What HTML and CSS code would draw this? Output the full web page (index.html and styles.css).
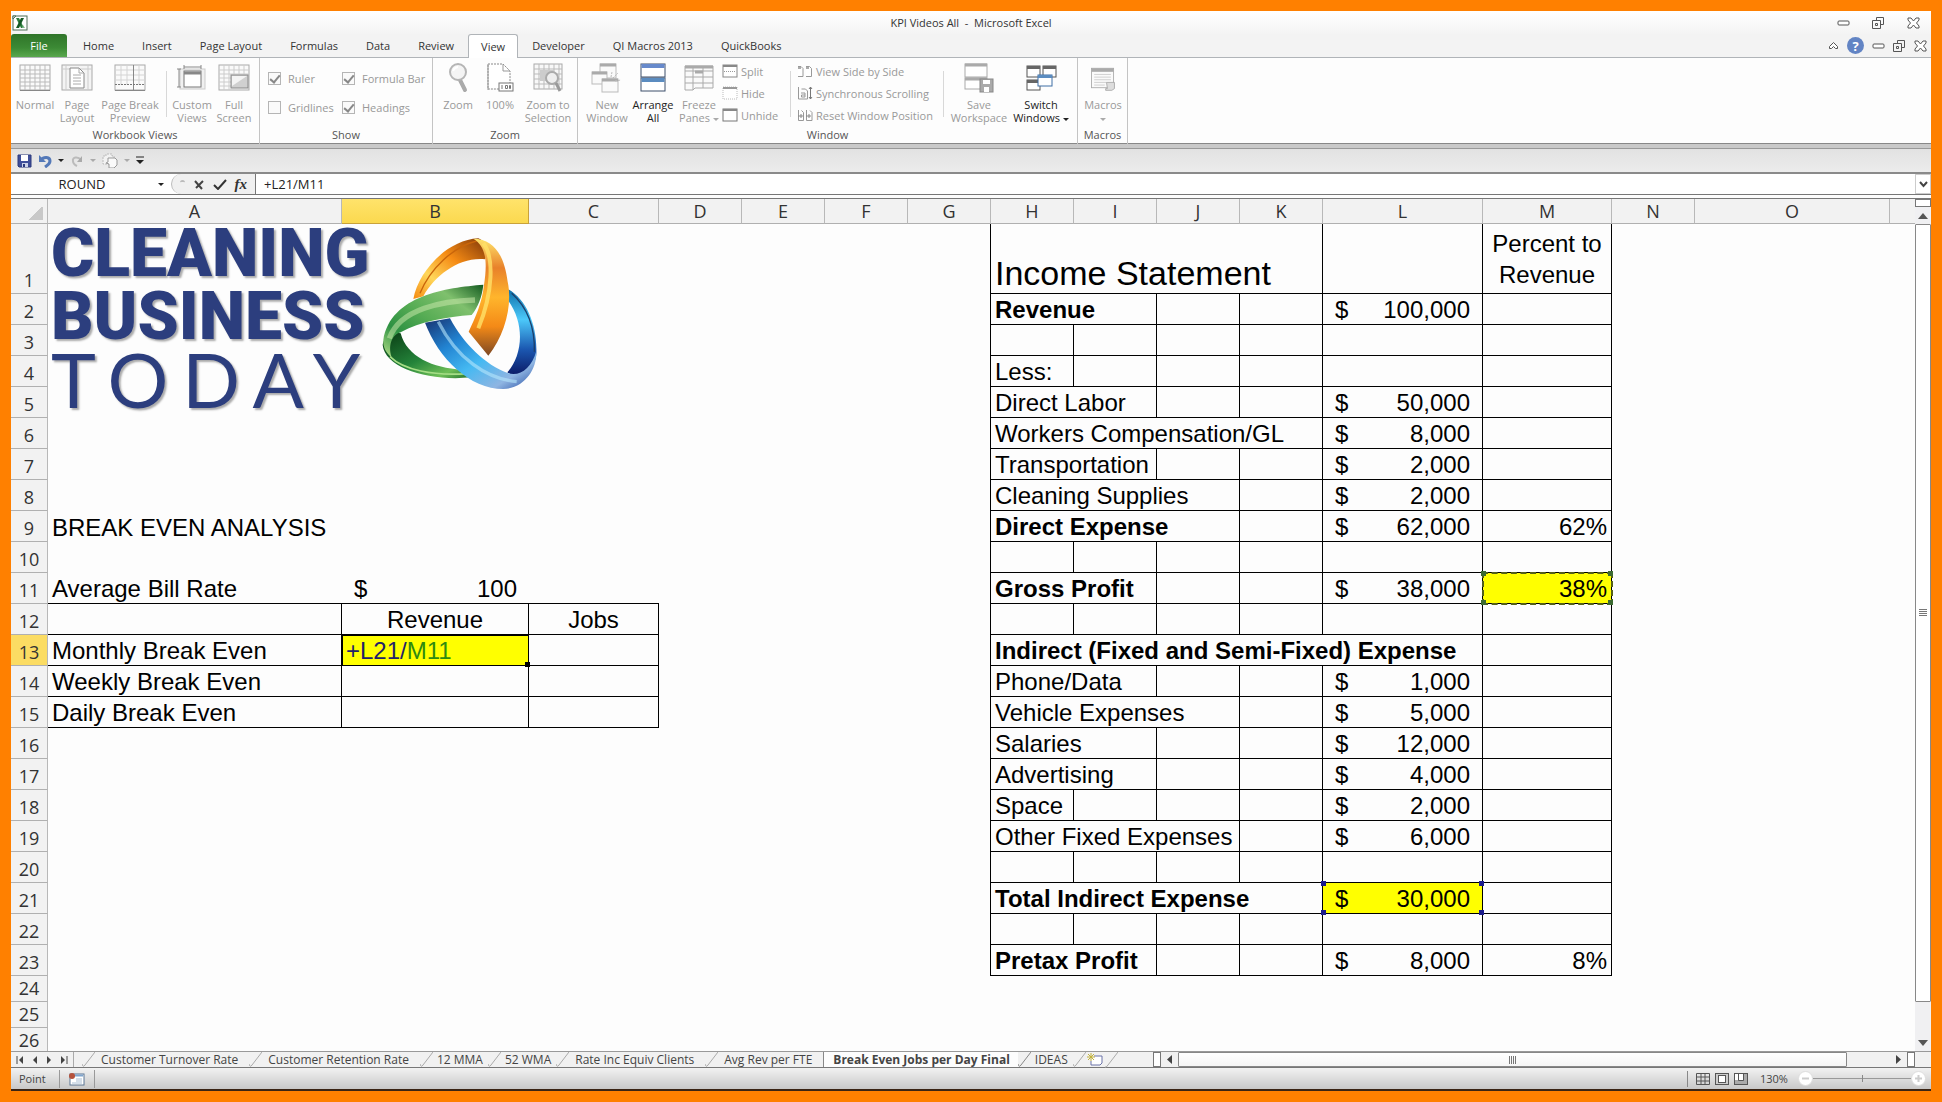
FILE: index.html
```html
<!DOCTYPE html>
<html lang="en">
<head>
  <meta charset="UTF-8" />
  <title>KPI Videos All - Microsoft Excel</title>
  <meta name="viewport" content="width=device-width, initial-scale=1.0"/>
  <link rel="stylesheet" href="styles.css">
</head>

<body>
  <div class="window">
    <!-- Title bar -->
    <header class="titlebar">
      <svg class="app-icon" width="16" height="16" viewBox="0 0 16 16">
        <rect x="1" y="1" width="14" height="14" fill="#fff" stroke="#4f6f57" />
        <path d="M1 4V1h3z" fill="#fff" stroke="#4f6f57" />
        <path d="M4 3h3l5 10H9z" fill="#2d7d3c" />
        <path d="M9 3h3L7 13H4z" fill="#155a25" />
        <path d="M11 10l2 3h-3z" fill="#7fb98a" />
      </svg>
      <h1>KPI Videos All&nbsp; -&nbsp; Microsoft Excel</h1>
      <div class="win-buttons">
        <button type="button" aria-label="Minimize"><svg width="13" height="12" viewBox="0 0 13 12"><rect x="1" y="4" width="11" height="4" rx="1" fill="#fff" stroke="#555" /></svg></button>
        <button type="button" aria-label="Restore"><svg width="13" height="12" viewBox="0 0 13 12"><path d="M4.500 3.500v-3h7v7h-3M.5 3.500h8v8h-8zM3.500 6.500h2v2h-2z" fill="none" stroke="#555" /></svg></button>
        <button type="button" aria-label="Close"><svg width="13" height="12" viewBox="0 0 13 12"><path d="M1 1h3l2.500 3L9 1h3v2L9.500 6 12 9v2H9L6.500 8 4 11H1V9l2.500-3L1 3z" fill="#fff" stroke="#555" /></svg></button>
      </div>
    </header>

    <!-- Ribbon tabs -->
    <nav class="tabs">
      <a class="file" href="#file">File</a>
      <a href="#home">Home</a>
      <a href="#insert">Insert</a>
      <a href="#page-layout">Page Layout</a>
      <a href="#formulas">Formulas</a>
      <a href="#data">Data</a>
      <a href="#review">Review</a>
      <a class="active" href="#view">View</a>
      <a href="#developer">Developer</a>
      <a href="#qi-macros">QI Macros 2013</a>
      <a href="#quickbooks">QuickBooks</a>
      <div class="doc-buttons">
        <button type="button" aria-label="Minimize ribbon"><svg width="11" height="12" viewBox="0 0 11 12"><path d="M1.500 6.500l4-4 4 4v2h-2l-2-2-2 2h-2z" fill="#fff" stroke="#555" /></svg></button>
        <button type="button" class="help" aria-label="Help">?</button>
        <button type="button" aria-label="Minimize workbook"><svg width="13" height="12" viewBox="0 0 13 12"><rect x="1" y="4" width="11" height="4" rx="1" fill="#fff" stroke="#555" /></svg></button>
        <button type="button" aria-label="Restore workbook"><svg width="13" height="12" viewBox="0 0 13 12"><path d="M4.500 3.500v-3h7v7h-3M.5 3.500h8v8h-8zM3.500 6.500h2v2h-2z" fill="none" stroke="#555" /></svg></button>
        <button type="button" aria-label="Close workbook"><svg width="13" height="12" viewBox="0 0 13 12"><path d="M1 1h3l2.500 3L9 1h3v2L9.500 6 12 9v2H9L6.500 8 4 11H1V9l2.500-3L1 3z" fill="#fff" stroke="#555" /></svg></button>
      </div>
    </nav>

    <!-- Ribbon -->
    <section class="ribbon">
      <div class="group views">
        <div class="tools">
          <button type="button" class="tool">
            <svg width="32" height="28" viewBox="0 0 32 28"><rect x="1" y="1" width="30" height="25" fill="#fafafa" stroke="#aaa" /><path d="M1 6h30M1 10h30M1 14h30M1 18h30M1 22h30M6 1v25M11 1v25M16 1v25M21 1v25M26 1v25" stroke="#bbb" /><path d="M1 26.500h30" stroke="#888" /></svg>
            <span>Normal</span>
          </button>
          <button type="button" class="tool">
            <svg width="32" height="28" viewBox="0 0 32 28"><rect x="1" y="1" width="30" height="25" fill="#f4f4f4" stroke="#aaa" /><path d="M1 5h30M5 1v25M27 1v25" stroke="#ccc" /><path d="M9 4h9l5 5v15H9z" fill="#fff" stroke="#888" /><path d="M18 4v5h5M12 11h8M12 14h8M12 17h8M12 20h8" fill="none" stroke="#aaa" /></svg>
            <span>Page<br>Layout</span>
          </button>
          <button type="button" class="tool wide">
            <svg width="32" height="28" viewBox="0 0 32 28"><rect x="1" y="1" width="30" height="25" fill="#fafafa" stroke="#aaa" /><path d="M1 6h30M1 11h30M1 16h30M7 1v20M13 1v20M25 1v20" stroke="#d4d4d4" /><path d="M19.500 1v25" stroke="#888" /><path d="M1 20.500h30" stroke="#777" stroke-dasharray="2 1" /><path d="M1 26.500h30" stroke="#888" /></svg>
            <span>Page Break<br>Preview</span>
          </button>
          <span class="divider"></span>
          <button type="button" class="tool">
            <svg width="32" height="28" viewBox="0 0 32 28"><rect x="4" y="5" width="25" height="20" fill="#f0f0f0" stroke="#ccc" /><rect x="8" y="7" width="17" height="16" fill="#fff" stroke="#777" /><path d="M8 9h17" stroke="#888" stroke-width="3" /><path d="M8 3h17M8 1v4M25 1v4M3 5v18M1 5h4M1 23h4" stroke="#888" /></svg>
            <span>Custom<br>Views</span>
          </button>
          <button type="button" class="tool">
            <svg width="32" height="28" viewBox="0 0 32 28"><rect x="1" y="1" width="30" height="25" fill="#fafafa" stroke="#aaa" /><path d="M1 6h30M1 10h30M1 14h12M1 18h12M1 22h12M6 1v25M11 1v25M16 1v9M21 1v9M26 1v9" stroke="#ccc" /><rect x="13" y="11" width="17" height="13" fill="#d0d0d0" stroke="#888" /><path d="M14 12h15L14 22z" fill="#f4f4f4" /></svg>
            <span>Full<br>Screen</span>
          </button>
        </div>
        <h2>Workbook Views</h2>
      </div>

      <div class="group show">
        <div class="checks">
          <label><input type="checkbox" checked> Ruler</label>
          <label><input type="checkbox" checked> Formula Bar</label>
          <label><input type="checkbox"> Gridlines</label>
          <label><input type="checkbox" checked> Headings</label>
        </div>
        <h2>Show</h2>
      </div>

      <div class="group zoom">
        <div class="tools">
          <button type="button" class="tool">
            <svg width="32" height="30" viewBox="0 0 32 30"><path d="M18 17l5 10" stroke="#aaa" stroke-width="4" stroke-linecap="round" /><circle cx="16" cy="9" r="8" fill="#f4f4f4" stroke="#b5b5b5" stroke-width="2" /><path d="M11 8a6 6 0 0 1 5-4" fill="none" stroke="#fff" stroke-width="2" /></svg>
            <span>Zoom</span>
          </button>
          <button type="button" class="tool">
            <svg width="32" height="30" viewBox="0 0 32 30"><path d="M4 1h15l7 7v18H4z" fill="#fff" stroke="#888" stroke-dasharray="2 1" /><path d="M4 1v26M19 1v7h7" fill="none" stroke="#999" /><rect x="15" y="20" width="14" height="8" fill="#fff" stroke="#777" /><path d="M18 22v4M21.500 22.500h2v3h-2zM25.500 22.500h1v3h-1z" fill="none" stroke="#777" /></svg>
            <span>100%</span>
          </button>
          <button type="button" class="tool wide">
            <svg width="32" height="30" viewBox="0 0 32 30"><rect x="2" y="1" width="28" height="25" fill="#f8f8f8" stroke="#aaa" /><path d="M2 6h28M2 11h28M2 16h28M2 21h28M7 1v25M12 1v25M17 1v25M22 1v25M27 1v25" stroke="#bbb" /><rect x="8" y="7" width="14" height="11" fill="#ccc" /><circle cx="20" cy="15" r="6" fill="#eee" stroke="#aaa" stroke-width="2" /><path d="M24 20l4 8" stroke="#999" stroke-width="3" /></svg>
            <span>Zoom to<br>Selection</span>
          </button>
        </div>
        <h2>Zoom</h2>
      </div>

      <div class="group windows">
        <div class="tools">
          <button type="button" class="tool">
            <svg width="32" height="30" viewBox="0 0 32 30"><g fill="#fafafa" stroke="#bbb"><rect x="9" y="1" width="16" height="14" /><rect x="1" y="9" width="15" height="12" /><rect x="11" y="16" width="16" height="13" /></g><path d="M9 2h16M1 10h15M11 17h16" stroke="#aaa" stroke-width="3" /><path d="M22 15l5-5M24 18l6-1M20 14l1-5" stroke="#bbb" stroke-dasharray="2 1" /></svg>
            <span>New<br>Window</span>
          </button>
          <button type="button" class="tool enabled">
            <svg width="26" height="30" viewBox="0 0 26 30"><rect x="1" y="1" width="24" height="13" fill="#fff" stroke="#3d4f6b" /><rect x="1" y="15" width="24" height="13" fill="#fff" stroke="#3d4f6b" /><path d="M1.500 3h23" stroke="#6689cb" stroke-width="4" /><path d="M1.500 17h23" stroke="#5b8cc0" stroke-width="4" /></svg>
            <span>Arrange<br>All</span>
          </button>
          <button type="button" class="tool">
            <svg width="32" height="30" viewBox="0 0 32 30"><path d="M2 3h28v22H12l-2 2H2z" fill="#fafafa" stroke="#aaa" /><path d="M2 8h28M2 14h28M2 20h28M20 3v22M10 3v24" stroke="#aaa" /><path d="M12 9h8M2 4h28" stroke="#aaa" stroke-width="3" /></svg>
            <span>Freeze<br>Panes <i class="caret"></i></span>
          </button>
          <div class="stack">
            <button type="button"><svg width="16" height="14" viewBox="0 0 16 14"><rect x="1" y="1" width="14" height="12" fill="#fff" stroke="#888" /><path d="M1 2h14" stroke="#888" stroke-width="2" /><path d="M2 7.500h12" stroke="#999" stroke-dasharray="1 1" /></svg>Split</button>
            <button type="button"><svg width="16" height="14" viewBox="0 0 16 14"><rect x="1" y="1" width="14" height="12" fill="#fff" stroke="#bbb" stroke-dasharray="1 1" /><path d="M1 2h14" stroke="#999" stroke-width="2" /></svg>Hide</button>
            <button type="button"><svg width="16" height="14" viewBox="0 0 16 14"><rect x="1" y="1" width="14" height="12" fill="#fff" stroke="#777" /><path d="M1 2h14" stroke="#888" stroke-width="2" /></svg>Unhide</button>
          </div>
          <span class="divider"></span>
          <div class="stack side">
            <button type="button"><svg width="16" height="14" viewBox="0 0 16 14"><path d="M1 12.500h5v-8l-2-2H1M9 12.500h5.500v-8l-2-2H9" fill="#fff" stroke="#999" /><path d="M1 4h3M9 4h3" stroke="#aaa" stroke-width="2" /></svg>View Side by Side</button>
            <button type="button"><svg width="16" height="14" viewBox="0 0 16 14"><path d="M1.500 1v12h9V5l-2-2h-4M4 7h4v4H4.500V9H8" fill="none" stroke="#999" /><path d="M13.500 1v12M12 3l1.500-2L15 3M12 11l1.500 2 1.500-2" fill="none" stroke="#777" /></svg>Synchronous Scrolling</button>
            <button type="button"><svg width="16" height="14" viewBox="0 0 16 14"><path d="M1.500 2v10.500h5v-8l-2-2M9.500 2v10.500H15v-8l-2-2" fill="#fff" stroke="#999" /><path d="M1 8h5M9 8h5M4 6v4M12 6v4" stroke="#888" /></svg>Reset Window Position</button>
          </div>
          <span class="divider"></span>
          <button type="button" class="tool wide">
            <svg width="32" height="30" viewBox="0 0 32 30"><g fill="#fff" stroke="#aaa"><rect x="2" y="1" width="22" height="13" /><rect x="2" y="15" width="22" height="11" /></g><path d="M2 2h22M2 16h22" stroke="#aaa" stroke-width="3" /><rect x="17" y="16" width="13" height="13" fill="#aaa" stroke="#888" /><path d="M20 17h7v4h-7zM21 24h5v5h-5z" fill="#fff" /></svg>
            <span>Save<br>Workspace</span>
          </button>
          <button type="button" class="tool wide enabled">
            <svg width="32" height="30" viewBox="0 0 32 30"><g fill="#fff" stroke="#555"><rect x="2" y="3" width="13" height="11" /><rect x="18" y="3" width="13" height="11" /><rect x="2" y="17" width="13" height="10" /></g><path d="M2 4.500h13M18 4.500h13M2 18.500h13" stroke="#666" stroke-width="3" /><rect x="13" y="12" width="14" height="11" fill="#fff" stroke="#3f6fa5" /><path d="M13 13.500h14" stroke="#5b8cc0" stroke-width="3" /></svg>
            <span>Switch<br>Windows <i class="caret"></i></span>
          </button>
        </div>
        <h2>Window</h2>
      </div>

      <div class="group macros">
        <div class="tools">
          <button type="button" class="tool">
            <svg width="32" height="34" viewBox="0 0 32 34"><rect x="3" y="6" width="25" height="22" fill="#fafafa" stroke="#aaa" /><path d="M3 8h25" stroke="#aaa" stroke-width="4" /><path d="M6 13h19M6 16h19M6 19h19M6 22h14M6 25h12" stroke="#ccc" /><path d="M20 22h9v7l-3 2h-7v-2h2z" fill="#ddd" stroke="#aaa" /></svg>
            <span>Macros<br><i class="caret"></i></span>
          </button>
        </div>
        <h2>Macros</h2>
      </div>
    </section>

    <!-- Quick access toolbar -->
    <div class="quick-access">
      <button type="button" aria-label="Save"><svg width="15" height="14" viewBox="0 0 15 14"><path d="M1 1h13v12H2l-1-1z" fill="#3f4f9a" stroke="#2c3a7c" /><path d="M4 1h7v6H4z" fill="#fff" /><path d="M5 9h6v4H5z" fill="#ccd3ea" /><path d="M6 10h2v3H6z" fill="#2c3a7c" /></svg></button>
      <button type="button" aria-label="Undo"><svg width="14" height="14" viewBox="0 0 14 14"><path d="M3 6c3-4 9-3 9 1 0 3-2 4-5 6" fill="none" stroke="#5479b8" stroke-width="3" /><path d="M1 1v7h7z" fill="#5479b8" /></svg></button>
      <i class="caret dark"></i>
      <button type="button" aria-label="Redo"><svg width="14" height="14" viewBox="0 0 14 14"><path d="M11 6C8 2 2 3 3 7c0 3 2 4 4 5" fill="none" stroke="#bbb" stroke-width="2" /><path d="M12 2v6H7z" fill="#aaa" /></svg></button>
      <i class="caret"></i>
      <button type="button" aria-label="Copy"><svg width="16" height="15" viewBox="0 0 16 15"><path d="M1 3h3V1h6v2h2v8H1z" fill="#f2f2f2" stroke="#bbb" stroke-dasharray="2 1" /><path d="M6 5h7l2 2v5l-3 3H7v-4l-3-1 2-1z" fill="#fafafa" stroke="#999" /></svg></button>
      <i class="caret"></i>
      <button type="button" aria-label="Customize toolbar"><svg width="8" height="9" viewBox="0 0 8 9"><path d="M0 1h8" stroke="#222" /><path d="M0 4h8L4 8z" fill="#222" /></svg></button>
    </div>

    <!-- Formula bar -->
    <div class="formula-bar">
      <input class="name-box" type="text" value="ROUND" aria-label="Name box">
      <i class="caret dark"></i>
      <div class="formula-buttons">
        <span class="grip"></span>
        <button type="button" aria-label="Cancel"><svg width="12" height="11" viewBox="0 0 12 11"><path d="M2 2l7 8M10 2L3 9" fill="none" stroke="#444" stroke-width="2" /></svg></button>
        <button type="button" aria-label="Enter"><svg width="14" height="11" viewBox="0 0 14 11"><path d="M1 6l4 4 8-9" fill="none" stroke="#333" stroke-width="2" /></svg></button>
        <button type="button" class="fx" aria-label="Insert function">fx</button>
      </div>
      <input class="formula" type="text" value="+L21/M11" aria-label="Formula">
      <button type="button" class="expand" aria-label="Expand formula bar"><svg width="9" height="7" viewBox="0 0 9 7"><path d="M1 1l3.500 4L8 1" fill="none" stroke="#444" stroke-width="2" /></svg></button>
    </div>

    <!-- Worksheet -->
    <main class="workarea">
      <div class="sheet">
        <table>
          <colgroup>
            <col class="c-head"><col class="c-a"><col class="c-b"><col class="c-c">
            <col class="c-std" span="8"><col class="c-l"><col class="c-m"><col class="c-std"><col class="c-o"><col>
          </colgroup>
          <thead>
            <tr>
              <th class="corner"></th><th>A</th><th class="current">B</th><th>C</th><th>D</th><th>E</th><th>F</th><th>G</th>
              <th>H</th><th>I</th><th>J</th><th>K</th><th>L</th><th>M</th><th>N</th><th>O</th><th></th>
            </tr>
          </thead>
          <tbody>
            <tr class="tall"><th>1</th><td colspan="7" class="edge"></td><td colspan="4" class="ln big">Income Statement</td><td class="ln"></td><td class="ln wrap">Percent to Revenue</td><td colspan="3"></td></tr>
            <tr><th>2</th><td colspan="7" class="edge"></td><td colspan="2" class="ln total">Revenue</td><td class="ln"></td><td class="ln"></td><td class="ln"><div class="money"><span>$</span><span>100,000</span></div></td><td class="ln"></td><td colspan="3"></td></tr>
            <tr><th>3</th><td colspan="7" class="edge"></td><td class="ln"></td><td class="ln"></td><td class="ln"></td><td class="ln"></td><td class="ln"></td><td class="ln"></td><td colspan="3"></td></tr>
            <tr><th>4</th><td colspan="7" class="edge"></td><td class="ln">Less:</td><td class="ln"></td><td class="ln"></td><td class="ln"></td><td class="ln"></td><td class="ln"></td><td colspan="3"></td></tr>
            <tr><th>5</th><td colspan="7" class="edge"></td><td colspan="2" class="ln">Direct Labor</td><td class="ln"></td><td class="ln"></td><td class="ln"><div class="money"><span>$</span><span>50,000</span></div></td><td class="ln"></td><td colspan="3"></td></tr>
            <tr><th>6</th><td colspan="7" class="edge"></td><td colspan="4" class="ln">Workers Compensation/GL</td><td class="ln"><div class="money"><span>$</span><span>8,000</span></div></td><td class="ln"></td><td colspan="3"></td></tr>
            <tr><th>7</th><td colspan="7" class="edge"></td><td colspan="2" class="ln">Transportation</td><td class="ln"></td><td class="ln"></td><td class="ln"><div class="money"><span>$</span><span>2,000</span></div></td><td class="ln"></td><td colspan="3"></td></tr>
            <tr><th>8</th><td colspan="7" class="edge"></td><td colspan="3" class="ln">Cleaning Supplies</td><td class="ln"></td><td class="ln"><div class="money"><span>$</span><span>2,000</span></div></td><td class="ln"></td><td colspan="3"></td></tr>
            <tr><th>9</th><td colspan="7" class="edge">BREAK EVEN ANALYSIS</td><td colspan="3" class="ln total">Direct Expense</td><td class="ln"></td><td class="ln"><div class="money"><span>$</span><span>62,000</span></div></td><td class="ln pct">62%</td><td colspan="3"></td></tr>
            <tr><th>10</th><td colspan="7" class="edge"></td><td class="ln"></td><td class="ln"></td><td class="ln"></td><td class="ln"></td><td class="ln"></td><td class="ln"></td><td colspan="3"></td></tr>
            <tr><th>11</th><td class="under">Average Bill Rate</td><td class="under"><div class="money"><span>$</span><span>100</span></div></td><td class="under"></td><td colspan="4" class="edge"></td><td colspan="2" class="ln total">Gross Profit</td><td class="ln"></td><td class="ln"></td><td class="ln"><div class="money"><span>$</span><span>38,000</span></div></td><td class="ln pct ref green">38%<i class="h tl"></i><i class="h tr"></i><i class="h bl"></i><i class="h br"></i></td><td colspan="3"></td></tr>
            <tr><th>12</th><td class="ln"></td><td class="ln mid">Revenue</td><td class="ln mid">Jobs</td><td colspan="4" class="edge"></td><td class="ln"></td><td class="ln"></td><td class="ln"></td><td class="ln"></td><td class="ln"></td><td class="ln"></td><td colspan="3"></td></tr>
            <tr><th class="current">13</th><td class="ln">Monthly Break Even</td><td class="ln editing"><span class="ref-l">+L21/</span><span class="ref-m">M11</span><i class="h br"></i></td><td class="ln"></td><td colspan="4" class="edge"></td><td colspan="5" class="ln total">Indirect (Fixed and Semi-Fixed) Expense</td><td class="ln"></td><td colspan="3"></td></tr>
            <tr><th>14</th><td class="ln">Weekly Break Even</td><td class="ln"></td><td class="ln"></td><td colspan="4" class="edge"></td><td colspan="2" class="ln">Phone/Data</td><td class="ln"></td><td class="ln"></td><td class="ln"><div class="money"><span>$</span><span>1,000</span></div></td><td class="ln"></td><td colspan="3"></td></tr>
            <tr><th>15</th><td class="ln">Daily Break Even</td><td class="ln"></td><td class="ln"></td><td colspan="4" class="edge"></td><td colspan="3" class="ln">Vehicle Expenses</td><td class="ln"></td><td class="ln"><div class="money"><span>$</span><span>5,000</span></div></td><td class="ln"></td><td colspan="3"></td></tr>
            <tr><th>16</th><td colspan="7" class="edge"></td><td colspan="2" class="ln">Salaries</td><td class="ln"></td><td class="ln"></td><td class="ln"><div class="money"><span>$</span><span>12,000</span></div></td><td class="ln"></td><td colspan="3"></td></tr>
            <tr><th>17</th><td colspan="7" class="edge"></td><td colspan="2" class="ln">Advertising</td><td class="ln"></td><td class="ln"></td><td class="ln"><div class="money"><span>$</span><span>4,000</span></div></td><td class="ln"></td><td colspan="3"></td></tr>
            <tr><th>18</th><td colspan="7" class="edge"></td><td class="ln">Space</td><td class="ln"></td><td class="ln"></td><td class="ln"></td><td class="ln"><div class="money"><span>$</span><span>2,000</span></div></td><td class="ln"></td><td colspan="3"></td></tr>
            <tr><th>19</th><td colspan="7" class="edge"></td><td colspan="3" class="ln">Other Fixed Expenses</td><td class="ln"></td><td class="ln"><div class="money"><span>$</span><span>6,000</span></div></td><td class="ln"></td><td colspan="3"></td></tr>
            <tr><th>20</th><td colspan="7" class="edge"></td><td class="ln"></td><td class="ln"></td><td class="ln"></td><td class="ln"></td><td class="ln"></td><td class="ln"></td><td colspan="3"></td></tr>
            <tr><th>21</th><td colspan="7" class="edge"></td><td colspan="4" class="ln total">Total Indirect Expense</td><td class="ln ref blue"><div class="money"><span>$</span><span>30,000</span></div><i class="h tl"></i><i class="h tr"></i><i class="h bl"></i><i class="h br"></i></td><td class="ln"></td><td colspan="3"></td></tr>
            <tr><th>22</th><td colspan="7" class="edge"></td><td class="ln"></td><td class="ln"></td><td class="ln"></td><td class="ln"></td><td class="ln"></td><td class="ln"></td><td colspan="3"></td></tr>
            <tr><th>23</th><td colspan="7" class="edge"></td><td colspan="2" class="ln total">Pretax Profit</td><td class="ln"></td><td class="ln"></td><td class="ln"><div class="money"><span>$</span><span>8,000</span></div></td><td class="ln pct">8%</td><td colspan="3"></td></tr>
            <tr class="short"><th>24</th><td colspan="16"></td></tr>
            <tr class="short"><th>25</th><td colspan="16"></td></tr>
            <tr class="short"><th>26</th><td colspan="16"></td></tr>
          </tbody>
        </table>

        <!-- Logo picture floating over A1:B6 -->
        <div class="logo">
          <div class="logo-text">
            <b>CLEANING</b>
            <b>BUSINESS</b>
            <span>TODAY</span>
          </div>
          <svg width="180" height="180" viewBox="0 0 540 540">
            <defs>
              <linearGradient id="ob" x1="0" y1="1" x2="1" y2="0"><stop offset="0" stop-color="#f58a10" /><stop offset=".3" stop-color="#ffd75a" /><stop offset=".6" stop-color="#f58b14" /><stop offset="1" stop-color="#7c3408" /></linearGradient>
              <linearGradient id="of" x1="0" y1="0" x2="0" y2="1"><stop offset="0" stop-color="#ffe46c" /><stop offset=".25" stop-color="#e8812a" /><stop offset=".5" stop-color="#ffb52c" /><stop offset=".75" stop-color="#f48a17" /><stop offset="1" stop-color="#7d4823" /></linearGradient>
              <linearGradient id="gf" x1="1" y1="0" x2="0" y2="1"><stop offset="0" stop-color="#145a20" /><stop offset=".25" stop-color="#7fc06d" /><stop offset=".5" stop-color="#58ad55" /><stop offset=".75" stop-color="#2d9142" /><stop offset="1" stop-color="#b6e08a" /></linearGradient>
              <linearGradient id="gb" x1="0" y1="0" x2="1" y2="1"><stop offset="0" stop-color="#093a13" /><stop offset=".5" stop-color="#24843a" /><stop offset=".8" stop-color="#6fbf57" /><stop offset="1" stop-color="#1f6e2b" /></linearGradient>
              <linearGradient id="bf" x1="0" y1="0" x2="1" y2="1"><stop offset="0" stop-color="#17316f" /><stop offset=".3" stop-color="#2284d2" /><stop offset=".55" stop-color="#45b9f2" /><stop offset=".8" stop-color="#8fb5e2" /><stop offset="1" stop-color="#234aa0" /></linearGradient>
              <linearGradient id="bb" x1="0" y1="0" x2="0" y2="1"><stop offset="0" stop-color="#0e6fa8" /><stop offset=".35" stop-color="#4cc9fa" /><stop offset=".7" stop-color="#1b57b0" /><stop offset="1" stop-color="#0b1a66" /></linearGradient>
            </defs>
            <path d="M130 222C145 140 230 45 325 40C350 50 358 80 345 103C270 95 195 150 160 214Z" fill="url(#ob)" />
            <path d="M150 205C180 130 250 65 320 48" fill="none" stroke="#c9650a" stroke-width="4" />
            <path d="M415 193C470 225 502 300 499 385C497 440 440 465 412 442C455 395 470 300 411 222Z" fill="url(#bb)" />
            <path d="M425 205C475 250 495 310 493 380" fill="none" stroke="#1d3f6b" stroke-width="4" />
            <path d="M92 325C55 320 40 345 38 360C45 430 180 470 303 457L275 434C190 430 110 395 92 325Z" fill="url(#gb)" />
            <path d="M60 395C100 435 190 453 290 446" fill="none" stroke="#a6dd86" stroke-width="5" />
            <path d="M310 41C350 65 352 115 342 180C336 235 315 280 296 320L355 392C405 330 428 240 413 170C403 95 375 42 310 41Z" fill="url(#of)" />
            <path d="M340 55C372 95 370 200 325 310" fill="none" stroke="#ffe168" stroke-width="12" opacity=".8" />
            <path d="M340 179C230 188 62 210 40 345C38 365 48 385 65 397C52 355 70 328 92 322C150 290 230 275 305 270C325 245 336 215 340 179Z" fill="url(#gf)" />
            <path d="M315 225C220 228 90 250 58 340" fill="none" stroke="#c4e6a8" stroke-width="16" opacity=".55" />
            <path d="M165 293C205 400 300 492 400 492C465 490 502 430 499 378C485 430 450 455 415 445C345 420 280 355 240 280Z" fill="url(#bf)" />
            <path d="M205 290C260 400 350 462 440 470" fill="none" stroke="#b5e6fb" stroke-width="10" opacity=".6" />
          </svg>
        </div>
      </div>

      <!-- Vertical scrollbar -->
      <div class="vscroll">
        <span class="split-box"></span>
        <button type="button" aria-label="Scroll up"><svg width="10" height="6" viewBox="0 0 10 6"><path d="M0 6l5-6 5 6z" fill="#555" /></svg></button>
        <div class="track"><div class="thumb"><i></i><i></i><i></i><i></i></div></div>
        <button type="button" aria-label="Scroll down"><svg width="10" height="6" viewBox="0 0 10 6"><path d="M0 0h10L5 6z" fill="#555" /></svg></button>
      </div>
    </main>

    <!-- Sheet tabs and horizontal scrollbar -->
    <div class="sheet-bar">
      <div class="sheet-nav">
        <button type="button" aria-label="First sheet"><svg width="8" height="8" viewBox="0 0 8 8"><path d="M1 0v8" stroke="#444" /><path d="M7 0v8L3 4z" fill="#444" /></svg></button>
        <button type="button" aria-label="Previous sheet"><svg width="8" height="8" viewBox="0 0 8 8"><path d="M6 0v8L2 4z" fill="#444" /></svg></button>
        <button type="button" aria-label="Next sheet"><svg width="8" height="8" viewBox="0 0 8 8"><path d="M2 0v8l4-4z" fill="#444" /></svg></button>
        <button type="button" aria-label="Last sheet"><svg width="8" height="8" viewBox="0 0 8 8"><path d="M1 0v8l4-4z" fill="#444" /><path d="M7 0v8" stroke="#444" /></svg></button>
      </div>
      <svg class="slant" width="13" height="16" viewBox="0 0 13 16"><path d="M13 0L3 13Q1 16 0 12" fill="none" stroke="#aaa" /></svg>
      <a class="loose" href="#s1">Customer Turnover Rate</a>
      <svg class="slant" width="13" height="16" viewBox="0 0 13 16"><path d="M13 0L3 13Q1 16 0 12" fill="none" stroke="#aaa" /></svg>
      <a class="loose" href="#s2">Customer Retention Rate</a>
      <svg class="slant" width="13" height="16" viewBox="0 0 13 16"><path d="M13 0L3 13Q1 16 0 12" fill="none" stroke="#aaa" /></svg>
      <a href="#s3">12 MMA</a>
      <svg class="slant" width="13" height="16" viewBox="0 0 13 16"><path d="M13 0L3 13Q1 16 0 12" fill="none" stroke="#aaa" /></svg>
      <a href="#s4">52 WMA</a>
      <svg class="slant" width="13" height="16" viewBox="0 0 13 16"><path d="M13 0L3 13Q1 16 0 12" fill="none" stroke="#aaa" /></svg>
      <a class="loose" href="#s5">Rate Inc Equiv Clients</a>
      <svg class="slant" width="13" height="16" viewBox="0 0 13 16"><path d="M13 0L3 13Q1 16 0 12" fill="none" stroke="#aaa" /></svg>
      <a class="loose" href="#s6">Avg Rev per FTE</a>
      <a class="active" href="#s7">Break Even Jobs per Day Final</a>
      <svg class="slant" width="13" height="16" viewBox="0 0 13 16"><path d="M13 0L3 13Q1 16 0 12" fill="none" stroke="#888" /></svg>
      <a href="#s8">IDEAS</a>
      <svg class="slant" width="13" height="16" viewBox="0 0 13 16"><path d="M13 0L3 13Q1 16 0 12" fill="none" stroke="#aaa" /></svg>
      <button type="button" class="new-sheet" aria-label="Insert worksheet"><svg width="16" height="14" viewBox="0 0 16 14"><path d="M7 3h8v7l-2 2H4V8" fill="#fff" stroke="#6a72a8" /><path d="M4 0v8M0 4h8M1 1l6 6M7 1L1 7" stroke="#c2b23c" /></svg></button>
      <svg class="slant" width="13" height="16" viewBox="0 0 13 16"><path d="M13 0L3 13Q1 16 0 15" fill="none" stroke="#aaa" /></svg>
      <div class="hscroll">
        <span class="split-box"></span>
        <button type="button" aria-label="Scroll left"><svg width="5" height="9" viewBox="0 0 5 9"><path d="M5 0v9L0 4.500z" fill="#444" /></svg></button>
        <div class="track"><div class="thumb"><i></i><i></i><i></i><i></i></div></div>
        <button type="button" aria-label="Scroll right"><svg width="5" height="9" viewBox="0 0 5 9"><path d="M0 0v9l5-4.500z" fill="#444" /></svg></button>
        <span class="split-box"></span>
      </div>
    </div>

    <!-- Status bar -->
    <footer class="status">
      <span class="mode">Point</span>
      <button type="button" class="record" aria-label="Record macro"><svg width="16" height="14" viewBox="0 0 16 14"><rect x="1" y="2" width="14" height="11" fill="#fff" stroke="#5d7795" /><path d="M2 3.500h12" stroke="#7fa5cd" stroke-width="2" /><path d="M7 7h6M7 9h6M3 11h10" stroke="#a9bdd3" /><circle cx="3" cy="4" r="3" fill="#b5523c" /></svg></button>
      <div class="view-buttons">
        <button type="button" aria-label="Normal view"><svg width="14" height="12" viewBox="0 0 14 12"><path d="M.5.5h13v11H.5zM0 4h14M0 8h14M5 0v12M9 0v12" fill="none" stroke="#555" /></svg></button>
        <button type="button" aria-label="Page layout view"><svg width="14" height="12" viewBox="0 0 14 12"><rect x=".5" y=".5" width="13" height="11" fill="#ccc" stroke="#555" /><rect x="3.500" y="2.500" width="7" height="7" fill="#fff" stroke="#555" /></svg></button>
        <button type="button" aria-label="Page break preview"><svg width="14" height="12" viewBox="0 0 14 12"><rect x=".5" y=".5" width="13" height="11" fill="#aaa" stroke="#555" /><path d="M1 1h3v6H1zM5 1h4v6H5z" fill="#fff" /><path d="M4.500 1v6.500h5V1" fill="none" stroke="#555" /></svg></button>
      </div>
      <span class="percent">130%</span>
      <button type="button" class="round" aria-label="Zoom out"><svg width="15" height="15" viewBox="0 0 15 15"><circle cx="7.500" cy="7.500" r="7" fill="#fff" stroke="#ddd" /><path d="M4 7.500h7" stroke="#ccc" stroke-width="2" /></svg></button>
      <input type="range" min="0" max="100" value="50" aria-label="Zoom">
      <button type="button" class="round" aria-label="Zoom in"><svg width="15" height="15" viewBox="0 0 15 15"><circle cx="7.500" cy="7.500" r="7" fill="#fff" stroke="#ddd" /><path d="M4 7.500h7M7.500 4v7" stroke="#ccc" stroke-width="2" /></svg></button>
    </footer>
  </div>
</body>
</html>
```
FILE: styles.css
```css
/* =============== BASE =============== */
* {
  box-sizing: border-box;
}
html,
body {
  margin: 0;
  height: 100%;
}
body {
  padding: 11px;
  background: #ff8000;
  color: #333;
  font-family: "Open Sans", "Noto Sans", sans-serif;
  font-size: 11px;
  overflow: hidden;
}
h1,
h2 {
  margin: 0;
  font-size: 11px;
  font-weight: 400;
}
a {
  color: inherit;
  text-decoration: none;
}
button {
  display: flex;
  align-items: center;
  justify-content: center;
  margin: 0;
  padding: 0;
  border: 0;
  background: none;
  color: inherit;
  font: inherit;
}
input {
  font: inherit;
  color: inherit;
}
svg {
  display: block;
  flex: none;
}

.window {
  display: flex;
  flex-direction: column;
  height: 100%;
  background: #fdfdfd;
}

/* Small drop-down triangle */
.caret {
  display: inline-block;
  flex: none;
  border: 3px solid transparent;
  border-top-color: #aaa;
  border-bottom: 0;
  vertical-align: middle;
}
.caret.dark,
.enabled .caret {
  border-top-color: #222;
}

/* =============== TITLE BAR =============== */
.titlebar {
  display: grid;
  grid-template-columns: 1fr auto 1fr;
  align-items: center;
  height: 23px;
  background: linear-gradient(#fff, #f4f4f4);
}
.app-icon {
  margin-left: 1px;
}
.titlebar h1 {
  color: #333;
}
.win-buttons {
  display: flex;
  justify-content: flex-end;
  gap: 22px;
  padding-right: 11px;
}

/* =============== RIBBON TABS =============== */
.tabs {
  display: flex;
  align-items: stretch;
  height: 24px;
  background: #f3f3f3;
  border-bottom: 1px solid #b0b4b8;
}
.tabs a {
  padding: 0 14px;
  line-height: 24px;
}
.tabs .file {
  width: 56px;
  margin-right: 2px;
  padding: 0;
  border-radius: 3px 3px 0 0;
  background: linear-gradient(#2f7429, #3c8a35 60%, #5aa84e);
  color: #fff;
  text-align: center;
}
.tabs .active {
  margin-bottom: -1px;
  padding: 0 12px;
  border: 1px solid #b0b4b8;
  border-bottom: 0;
  border-radius: 3px 3px 0 0;
  background: #fff;
}
.doc-buttons {
  display: flex;
  align-items: center;
  gap: 8px;
  margin-left: auto;
  padding-right: 4px;
}
.doc-buttons .help {
  width: 17px;
  height: 17px;
  border-radius: 50%;
  background: #6284c4;
  color: #fff;
  font-size: 13px;
  font-weight: 700;
}

/* =============== RIBBON =============== */
.ribbon {
  display: flex;
  height: 90px;
  background: #fdfdfd;
  border-bottom: 4px solid #c9c9c9;
  box-shadow: inset 0 -1px #888;
  color: #999;
}
.group {
  display: flex;
  flex-direction: column;
  justify-content: space-between;
  border-right: 1px solid #c4c4c4;
}
.group h2 {
  height: 17px;
  color: #555;
  line-height: 15px;
  text-align: center;
}
.views {
  width: 249px;
}
.show {
  width: 173px;
}
.zoom {
  width: 145px;
}
.windows {
  width: 500px;
}
.macros {
  width: 50px;
}
.tools {
  display: flex;
  padding: 5px 3px 0;
}
.tool {
  display: flex;
  flex: none;
  flex-direction: column;
  align-items: center;
  justify-content: flex-start;
  width: 42px;
  line-height: 13px;
  white-space: nowrap;
}
.tool svg {
  height: 30px;
  margin-bottom: 5px;
}
.tool.wide {
  width: 64px;
}
.tool.enabled {
  color: #222;
}
.zoom .tools,
.macros .tools {
  padding-left: 4px;
}
.zoom .tool.wide {
  width: 54px;
}
.windows .tools {
  padding-left: 6px;
}
.windows .tool {
  width: 46px;
}
.windows .tool.wide {
  width: 62px;
}
.divider {
  flex: none;
  width: 1px;
  height: 46px;
  margin: 8px 4px 0;
  background: #d8d8d8;
}
.stack {
  display: flex;
  flex: none;
  flex-direction: column;
  align-items: flex-start;
  gap: 6px;
  width: 64px;
}
.stack.side {
  width: 144px;
  padding-left: 2px;
}
.stack button {
  gap: 3px;
  height: 16px;
  white-space: nowrap;
}
.checks {
  display: grid;
  grid-template-columns: 74px 1fr;
  gap: 13px 0;
  padding: 12px 0 0 8px;
}
.checks label {
  display: flex;
  align-items: center;
  gap: 7px;
  height: 16px;
  white-space: nowrap;
}
.checks input {
  display: grid;
  place-items: center;
  width: 13px;
  height: 13px;
  margin: 0;
  border: 1px solid #b5b5b5;
  background: #fafafa;
  appearance: none;
}
.checks input:checked::before {
  content: "";
  width: 4px;
  height: 8px;
  border: solid #888;
  border-width: 0 2px 2px 0;
  transform: rotate(40deg);
}

/* =============== QUICK ACCESS =============== */
.quick-access {
  display: flex;
  align-items: center;
  gap: 6px;
  height: 26px;
  padding-left: 6px;
  background: linear-gradient(#e2e2e2, #ececec);
  border-top: 1px solid #999;
  border-bottom: 2px solid #8a8a8a;
}

/* =============== FORMULA BAR =============== */
.formula-bar {
  display: flex;
  align-items: center;
  height: 21px;
  background: #fff;
  border-bottom: 1px solid #777;
  font-size: 13px;
}
.formula-bar input {
  height: 20px;
  padding: 0;
  border: 0;
  outline: 0;
  background: none;
  color: #222;
}
.name-box {
  width: 142px;
  margin-right: 5px;
  text-align: center;
}
.formula-buttons {
  display: flex;
  align-items: center;
  gap: 8px;
  height: 20px;
  width: 85px;
  margin-left: 7px;
  padding: 0 8px;
  border-left: 1px solid #bbb;
  border-right: 1px solid #777;
  border-radius: 10px 0 0 10px;
  background: #f0f0f0;
}
.grip {
  width: 8px;
  height: 8px;
  border-top: 2px solid #bbb;
  border-radius: 4px;
}
.fx {
  font-family: "Liberation Serif", serif;
  font-size: 15px;
  font-style: italic;
  font-weight: 700;
}
.formula {
  flex: 1;
  margin-left: 8px;
}
.expand {
  width: 16px;
  height: 20px;
  border: 1px solid #ccc;
}

/* =============== WORKSHEET =============== */
.workarea {
  display: flex;
  flex: 1;
  min-height: 0;
  margin-top: 3px;
  border-top: 1px solid #777;
}
.sheet {
  position: relative;
  flex: 1;
  min-width: 0;
  overflow: hidden;
}
table {
  width: 100%;
  table-layout: fixed;
  border-collapse: separate;
  border-spacing: 0;
  color: #000;
  font-family: "Liberation Sans", Arial, sans-serif;
  font-size: 24px;
}
.c-head { width: 37px; }
.c-a { width: 294px; }
.c-b { width: 187px; }
.c-c { width: 130px; }
.c-std { width: 83px; }
.c-l { width: 160px; }
.c-m { width: 129px; }
.c-o { width: 195px; }

th {
  padding: 0;
  border-right: 1px solid #b8b8b8;
  border-bottom: 1px solid #b0b0b0;
  background: #f2f2f2;
  color: #333;
  font-family: "Open Sans", "Noto Sans", sans-serif;
  font-size: 18px;
  font-weight: 400;
  line-height: 25px;
}
thead th {
  height: 25px;
  line-height: 24px;
}
tbody th {
  vertical-align: bottom;
}
thead th:last-child {
  border-right: 0;
}
thead .current {
  border-color: #c9a23a;
  background: linear-gradient(#ffe36b, #fbd94f);
}
tbody .current {
  background: #fbdc63;
}
.corner {
  background: linear-gradient(135deg, transparent 50%, #c8c8c8 50%) 18px 7px / 14px 14px no-repeat #f2f2f2;
}
td {
  height: 31px;
  padding: 2px 4px 0;
  line-height: 28px;
  white-space: nowrap;
}
.tall td {
  height: 70px;
}
.short td {
  height: 26px;
  padding: 0;
}
.ln {
  border-right: 1px solid #000;
  border-bottom: 1px solid #000;
}
.edge {
  border-right: 1px solid #000;
}
.under {
  border-bottom: 1px solid #000;
}
.big {
  font-size: 34px;
  line-height: 40px;
  vertical-align: bottom;
}
.wrap {
  padding-top: 0;
  line-height: 31px;
  text-align: center;
  white-space: normal;
}
.total {
  font-weight: 700;
}
.mid {
  text-align: center;
}
.pct {
  text-align: right;
}
.money {
  display: flex;
  justify-content: space-between;
  padding: 0 8px;
}

/* Cell being edited and the cells its formula points to */
.editing,
.ref {
  position: relative;
  background: #ff0;
}
.editing {
  outline: 1px solid #000;
  outline-offset: -1px;
}
.ref-l {
  color: #22226a;
}
.ref-m {
  color: #2f8a10;
}
.green {
  outline: 2px dashed #55601a;
  outline-offset: -1px;
}
.h {
  position: absolute;
  width: 5px;
  height: 5px;
  background: #000;
}
.green .h { background: #3c6a32; }
.blue .h { background: #1c1c8c; }
.tl { top: -2px; left: -2px; }
.tr { top: -2px; right: -2px; }
.bl { bottom: -2px; left: -2px; }
.br { bottom: -2px; right: -2px; }

/* =============== LOGO =============== */
.logo {
  position: absolute;
  top: 20px;
  left: 40px;
  display: flex;
}
.logo-text {
  display: flex;
  flex-direction: column;
  width: 319px;
  padding-top: 3px;
  color: #2c3e7e;
  font-family: Roboto, sans-serif;
  font-size: 66px;
  line-height: 63px;
  text-shadow: 2px 2px 2px #aaa;
}
.logo-text b {
  font-weight: 900;
}
.logo-text span {
  font-family: Lato, sans-serif;
  font-size: 76px;
  font-weight: 400;
  letter-spacing: 14px;
  line-height: 62px;
}
.logo svg {
  margin-top: 6px;
}

/* =============== SCROLLBARS =============== */
.vscroll {
  display: flex;
  flex-direction: column;
  width: 16px;
  background: #f0f0f2;
}
.vscroll .split-box {
  height: 8px;
  border: 1px solid #777;
  background: #fff;
}
.vscroll button {
  height: 17px;
}
.track {
  display: flex;
  flex: 1;
}
.thumb {
  display: flex;
  align-items: center;
  justify-content: center;
  gap: 1px;
  border: 1px solid #888;
  border-radius: 1px;
  background: #fff;
}
.vscroll .thumb {
  flex-direction: column;
  width: 100%;
  height: 96%;
}
.vscroll .thumb i {
  width: 8px;
  height: 1px;
  background: #777;
}

/* =============== SHEET TABS =============== */
.sheet-bar {
  display: flex;
  flex: none;
  height: 17px;
  background: #f1f1f1;
  border-top: 1px solid #999;
  border-bottom: 1px solid #777;
  color: #444;
  font-size: 12px;
  line-height: 15px;
}
.sheet-nav {
  display: flex;
  justify-content: space-between;
  width: 63px;
  margin-right: 8px;
  padding: 0 5px;
  border-right: 1px solid #aaa;
}
.sheet-bar a {
  padding: 0 5px 0 4px;
  white-space: nowrap;
}
.sheet-bar .loose {
  padding: 0 11px 0 6px;
}
.sheet-bar .active {
  padding: 0 8px 0 9px;
  border-left: 1px solid #888;
  background: #fdfdfd;
  font-weight: 700;
}
.new-sheet {
  width: 19px;
}
.hscroll {
  display: flex;
  flex: 1;
  margin-left: 35px;
  margin-right: 16px;
}
.hscroll .split-box {
  width: 8px;
  border: 1px solid #777;
  background: #fff;
}
.hscroll button {
  width: 17px;
}
.hscroll .thumb {
  width: 94%;
  background: linear-gradient(#fff, #f6f6f6);
}
.hscroll .thumb i {
  width: 1px;
  height: 8px;
  background: #777;
}

/* =============== STATUS BAR =============== */
.status {
  display: flex;
  flex: none;
  align-items: center;
  height: 23px;
  padding-right: 5px;
  background: linear-gradient(#f2f2f2, #c8c8c8);
  border-bottom: 2px solid #3a2414;
  color: #444;
}
.mode {
  width: 48px;
  padding-left: 8px;
}
.record {
  width: 36px;
  height: 18px;
  border: solid #999;
  border-width: 0 1px;
}
.view-buttons {
  display: flex;
  align-items: center;
  gap: 5px;
  height: 16px;
  margin-left: auto;
  padding-left: 8px;
  border-left: 1px solid #888;
}
.percent {
  width: 50px;
  padding-left: 12px;
}
.status input {
  width: 98px;
  height: 15px;
  margin: 0;
  background: linear-gradient(#999, #999) center / 100% 1px no-repeat;
  appearance: none;
}
.status input::-webkit-slider-thumb {
  width: 1px;
  height: 7px;
  background: #888;
  appearance: none;
}
```
